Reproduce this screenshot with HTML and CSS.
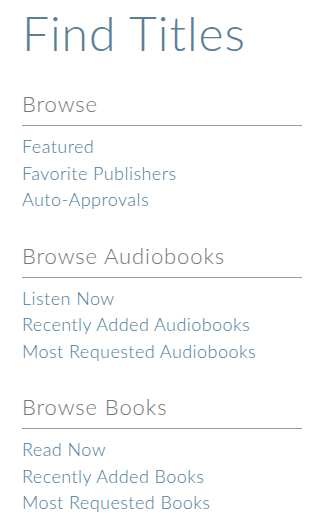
FILE: index.html
```html
<!DOCTYPE html>
<html lang="en">
<head>
<meta charset="utf-8">
<title>Find Titles</title>
<link rel="stylesheet" href="styles.css">
</head>
<body>
<main class="page">
  <h1 class="title">Find Titles</h1>
  <section class="group">
    <h2 class="group-head">Browse</h2>
    <ul class="links">
      <li><a href="#">Featured</a></li>
      <li><a href="#">Favorite Publishers</a></li>
      <li><a href="#">Auto-Approvals</a></li>
    </ul>
  </section>
  <section class="group">
    <h2 class="group-head">Browse Audiobooks</h2>
    <ul class="links">
      <li><a href="#">Listen Now</a></li>
      <li><a href="#">Recently Added Audiobooks</a></li>
      <li><a href="#">Most Requested Audiobooks</a></li>
    </ul>
  </section>
  <section class="group">
    <h2 class="group-head">Browse Books</h2>
    <ul class="links">
      <li><a href="#">Read Now</a></li>
      <li><a href="#">Recently Added Books</a></li>
      <li><a href="#">Most Requested Books</a></li>
    </ul>
  </section>
</main>
</body>
</html>
```
FILE: styles.css
```css
html, body {
  margin: 0;
  padding: 0;
  background: #ffffff;
}
.page {
  padding: 5px 19px 0 22px;
  font-family: Lato, "Open Sans", sans-serif;
  font-weight: 300;
}
.title {
  margin: 0 0 28px 0;
  font-size: 48px;
  line-height: 56px;
  font-weight: 300;
  letter-spacing: 1px;
  color: #5a7f95;
}
.group {
  margin-bottom: 28px;
}
.group-head {
  margin: 0;
  padding: 0 0 6px 0;
  font-size: 22px;
  line-height: 30px;
  font-weight: 300;
  letter-spacing: 0.9px;
  color: #777777;
  border-bottom: 1px solid #999999;
}
.links {
  list-style: none;
  margin: 0;
  padding: 7px 0 0 0;
}
.links li {
  font-size: 18px;
  line-height: 26.5px;
  letter-spacing: 0.45px;
}
.links a {
  color: #4e7b98;
  text-decoration: none;
}
```
